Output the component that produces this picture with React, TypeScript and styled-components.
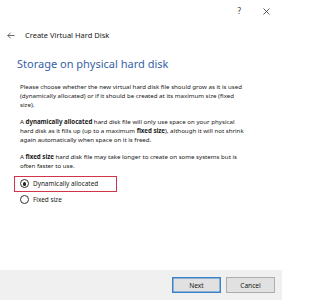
import React, { useState } from 'react'
import styled, { createGlobalStyle } from 'styled-components'

const GlobalStyle = createGlobalStyle`
  html, body {
    margin: 0;
    padding: 0;
    background: #ffffff;
  }
  body {
    font-family: 'Noto Sans', 'Open Sans', 'Liberation Sans', sans-serif;
    color: #1a1a1a;
  }
`

const Window = styled.div`
  width: 282px;
  height: 300px;
  display: flex;
  flex-direction: column;
  background: #ffffff;
  overflow: hidden;
`

const TitleBar = styled.div`
  height: 22px;
  display: flex;
  justify-content: flex-end;
  align-items: center;
  gap: 22px;
  padding: 0 12px 0 0;
`

const TitleButton = styled.span`
  font-size: 8px;
  color: #333333;
  line-height: 1;
`

const Header = styled.div`
  height: 24px;
  display: flex;
  align-items: center;
  gap: 10px;
  padding: 0 0 0 7px;
  margin-top: 1px;
`

const HeaderTitle = styled.span`
  font-size: 7.5px;
  color: #202020;
`

const Content = styled.div`
  flex: 1;
  padding: 10px 10px 0 17px;
`

const Heading = styled.h1`
  margin: 0 0 12px 0;
  font-size: 11px;
  font-weight: 400;
  color: #3662a8;
  line-height: 14px;
`

const Paragraph = styled.p`
  margin: 0 0 8.8px 3px;
  font-size: 6.15px;
  line-height: 8.8px;
  color: #202020;
`

const Line = styled.span`
  display: block;
  white-space: nowrap;
`

const Options = styled.div`
  display: flex;
  flex-direction: column;
  margin-top: -4px;
`

const Option = styled.label<{ $highlight?: boolean }>`
  box-sizing: border-box;
  display: flex;
  align-items: center;
  gap: 4px;
  width: 103px;
  height: 16px;
  margin-left: -3px;
  padding-left: 5px;
  border: 1px solid ${({ $highlight }) => ($highlight ? '#d0344a' : 'transparent')};
  font-size: 6.4px;
  color: #202020;
  cursor: pointer;
`

const RadioCircle = styled.span<{ $checked: boolean }>`
  width: 7px;
  height: 7px;
  border-radius: 50%;
  border: 1px solid #333333;
  display: flex;
  align-items: center;
  justify-content: center;
  background: #ffffff;
  &::after {
    content: '';
    width: 3.5px;
    height: 3.5px;
    border-radius: 50%;
    background: ${({ $checked }) => ($checked ? '#222222' : 'transparent')};
  }
`

const Footer = styled.div`
  height: 30px;
  background: #f0f0f0;
  display: flex;
  justify-content: flex-end;
  align-items: center;
  gap: 5px;
  padding: 0 7px 0 0;
`

const Button = styled.button<{ $primary?: boolean }>`
  width: 49px;
  height: 16px;
  padding: 0;
  font-family: inherit;
  font-size: 6.6px;
  color: #202020;
  background: #e1e1e1;
  border: 1px solid ${({ $primary }) => ($primary ? '#3c82c8' : '#adadad')};
  box-shadow: ${({ $primary }) => ($primary ? 'inset 0 0 0 0.5px #3c82c8' : 'none')};
`

const BackArrow = () => (
  <svg width="8" height="7" viewBox="0 0 8 7" fill="none" stroke="#444444" strokeWidth="0.8">
    <path d="M7.5 3.5H0.8M3.6 0.7L0.8 3.5L3.6 6.3" />
  </svg>
)

const CloseIcon = () => (
  <svg width="7" height="7" viewBox="0 0 7 7" stroke="#333333" strokeWidth="0.8">
    <path d="M0.5 0.5L6.5 6.5M6.5 0.5L0.5 6.5" />
  </svg>
)

const App = () => {
  const [choice, setChoice] = useState('dynamic')

  return (
    <>
      <GlobalStyle />
      <Window>
        <TitleBar>
          <TitleButton>?</TitleButton>
          <CloseIcon />
        </TitleBar>
        <Header>
          <BackArrow />
          <HeaderTitle>Create Virtual Hard Disk</HeaderTitle>
        </Header>
        <Content>
          <Heading>Storage on physical hard disk</Heading>
          <Paragraph>
            <Line>Please choose whether the new virtual hard disk file should grow as it is used</Line>
            <Line>(dynamically allocated) or if it should be created at its maximum size (fixed</Line>
            <Line>size).</Line>
          </Paragraph>
          <Paragraph>
            <Line>
              A <b>dynamically allocated</b> hard disk file will only use space on your physical
            </Line>
            <Line>
              hard disk as it fills up (up to a maximum <b>fixed size</b>), although it will not shrink
            </Line>
            <Line>again automatically when space on it is freed.</Line>
          </Paragraph>
          <Paragraph>
            <Line>
              A <b>fixed size</b> hard disk file may take longer to create on some systems but is
            </Line>
            <Line>often faster to use.</Line>
          </Paragraph>
          <Options>
            <Option $highlight onClick={() => setChoice('dynamic')}>
              <RadioCircle $checked={choice === 'dynamic'} />
              Dynamically allocated
            </Option>
            <Option onClick={() => setChoice('fixed')}>
              <RadioCircle $checked={choice === 'fixed'} />
              Fixed size
            </Option>
          </Options>
        </Content>
        <Footer>
          <Button $primary>Next</Button>
          <Button>Cancel</Button>
        </Footer>
      </Window>
    </>
  )
}

export default App
